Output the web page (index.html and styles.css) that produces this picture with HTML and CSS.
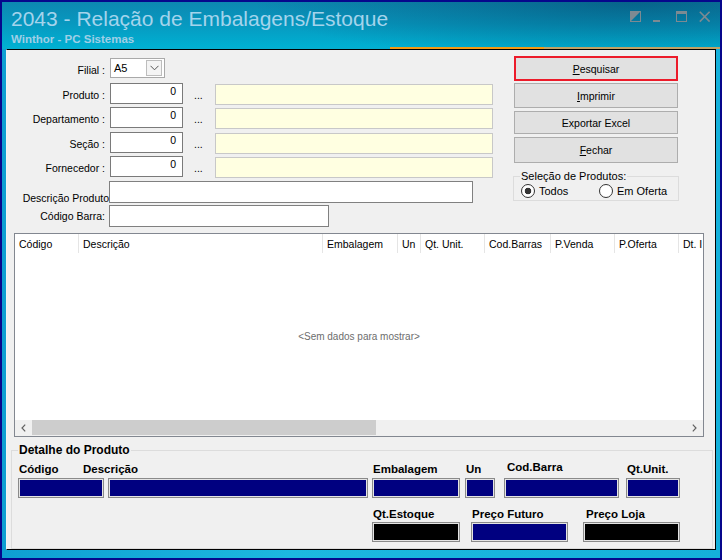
FILE: index.html
```html
<!DOCTYPE html>
<html lang="pt-BR">
<head>
    <meta charset="UTF-8">
    <title>2043 - Relação de Embalagens/Estoque</title>
    <link rel="stylesheet" href="styles.css">
</head>
<body>
<div class="window">
    <header class="titlebar">
        <div class="caption">
            <div class="title">2043 - Relação de Embalagens/Estoque</div>
            <div class="subtitle">Winthor - PC Sistemas</div>
        </div>
        <div class="controls">
            <svg width="12" height="12" viewBox="0 0 12 12"><rect x="0.5" y="0.5" width="10" height="10" fill="none" stroke="#7d8a92"/><polygon points="0,0 11,0 0,11" fill="#7d8a92"/></svg>
            <svg width="12" height="12" viewBox="0 0 12 12"><rect x="0" y="9" width="7" height="2" fill="#7d8a92"/></svg>
            <svg width="12" height="12" viewBox="0 0 12 12"><rect x="0.5" y="0.5" width="10" height="10" fill="none" stroke="#7d8a92"/><rect x="0" y="0" width="11" height="3" fill="#7d8a92"/></svg>
            <svg width="12" height="12" viewBox="0 0 12 12"><path d="M0.8 0.8 L10.6 10.6 M10.6 0.8 L0.8 10.6" stroke="#7d8a92" stroke-width="1.6" fill="none"/></svg>
        </div>
    </header>
    <div class="accent"></div>

    <main class="panel">
        <div class="top">
            <div class="form">
                <div class="row">
                    <label class="lbl">Filial :</label>
                    <div class="combo">
                        <span class="combo-val">A5</span>
                        <span class="combo-btn"><svg width="9" height="6" viewBox="0 0 9 6"><path d="M0.5 0.8 L4.5 4.8 L8.5 0.8" stroke="#555" fill="none"/></svg></span>
                    </div>
                </div>
                <div class="row">
                    <label class="lbl">Produto :</label>
                    <div class="num">0</div>
                    <span class="dots">...</span>
                    <div class="desc"></div>
                </div>
                <div class="row">
                    <label class="lbl">Departamento :</label>
                    <div class="num">0</div>
                    <span class="dots">...</span>
                    <div class="desc"></div>
                </div>
                <div class="row">
                    <label class="lbl">Seção :</label>
                    <div class="num">0</div>
                    <span class="dots">...</span>
                    <div class="desc"></div>
                </div>
                <div class="row">
                    <label class="lbl">Fornecedor :</label>
                    <div class="num">0</div>
                    <span class="dots">...</span>
                    <div class="desc"></div>
                </div>
                <div class="row">
                    <label class="lbl lbl-wide">Descrição Produto</label>
                    <div class="text text-long"></div>
                </div>
                <div class="row">
                    <label class="lbl lbl-mid">Código Barra:</label>
                    <div class="text text-short"></div>
                </div>
            </div>

            <div class="actions">
                <button class="btn btn-focus"><u>P</u>esquisar</button>
                <button class="btn btn-print"><u>I</u>mprimir</button>
                <button class="btn btn-export">Exportar Excel</button>
                <button class="btn btn-close"><u>F</u>echar</button>
                <fieldset class="choice">
                    <legend>Seleção de Produtos:</legend>
                    <span class="radio radio-on radio-first">Todos</span>
                    <span class="radio">Em Oferta</span>
                </fieldset>
            </div>
        </div>

        <div class="grid">
            <div class="grid-head">
                <div class="col c1">Código</div>
                <div class="col c2">Descrição</div>
                <div class="col c3">Embalagem</div>
                <div class="col c4">Un</div>
                <div class="col c5">Qt. Unit.</div>
                <div class="col c6">Cod.Barras</div>
                <div class="col c7">P.Venda</div>
                <div class="col c8">P.Oferta</div>
                <div class="col c9">Dt. I</div>
            </div>
            <div class="grid-body">&lt;Sem dados para mostrar&gt;</div>
            <div class="hscroll">
                <span class="arrow"><svg width="5" height="8" viewBox="0 0 5 8"><path d="M4.2 0.6 L1 4 L4.2 7.4" stroke="#606060" stroke-width="1.2" fill="none"/></svg></span>
                <span class="thumb"></span>
                <span class="track"></span>
                <span class="arrow"><svg width="5" height="8" viewBox="0 0 5 8"><path d="M0.8 0.6 L4 4 L0.8 7.4" stroke="#606060" stroke-width="1.2" fill="none"/></svg></span>
            </div>
        </div>

        <fieldset class="detail">
            <legend>Detalhe do Produto</legend>
            <div class="dlabels first-labels">
                <span class="dl w-codigo">Código</span>
                <span class="dl w-descricao">Descrição</span>
                <span class="dl w-embalagem">Embalagem</span>
                <span class="dl w-un">Un</span>
                <span class="dl w-codbarra">Cod.Barra</span>
                <span class="dl">Qt.Unit.</span>
            </div>
            <div class="dboxes">
                <span class="box b-codigo"></span>
                <span class="box b-descricao"></span>
                <span class="box b-embalagem"></span>
                <span class="box b-un"></span>
                <span class="box b-codbarra"></span>
                <span class="box b-qtunit"></span>
            </div>
            <div class="dlabels second-labels">
                <span class="dl w-estoque">Qt.Estoque</span>
                <span class="dl w-futuro">Preço Futuro</span>
                <span class="dl">Preço Loja</span>
            </div>
            <div class="dboxes second-boxes">
                <span class="box box-black b-estoque"></span>
                <span class="box b-futuro"></span>
                <span class="box box-black b-loja"></span>
            </div>
        </fieldset>
    </main>
</div>
</body>
</html>
```

FILE: styles.css
```css
*{
    margin:0;
    padding:0;
    box-sizing:border-box;
}

body {
    font-family:"Liberation Sans", Arial, sans-serif;
    font-size:10.5px;
    color:#000;
    background:#fff;
}

/* janela */
.window {
    width:722px;
    height:560px;
    border:2px solid #06078c;
    background:linear-gradient(to right, #0e9fd2, #1cb8e0 40%, #14b0da);
    padding:0 4px 8px;
    display:flex;
    flex-direction:column;
}
.titlebar {
    margin:0 -4px;
    height:45px;
    display:flex;
    justify-content:space-between;
    background:
        radial-gradient(ellipse 380px 60px at 88% 0%, rgba(0,55,90,0.45), rgba(0,55,90,0) 100%),
        linear-gradient(180deg, #0d88b1 0%, #0799c0 50%, #00b0d2 100%);
}
.caption {
    padding:5px 0 0 9px;
}
.title {
    font-size:21px;
    line-height:24px;
    color:#a4d4ec;
}
.subtitle {
    margin-top:2px;
    font-size:11.5px;
    line-height:13px;
    font-weight:bold;
    color:#9fcfe6;
}
.controls {
    display:flex;
    gap:11px;
    padding:9px 9px 0 0;
}
.accent {
    margin:0 -4px;
    height:2px;
    background:linear-gradient(to right, #05aed0 0, #05aed0 388px, #f29a16 388px, #f29a16 542px, #c0a266 542px);
}

/* painel */
.panel {
    flex:1;
    display:flex;
    flex-direction:column;
    background:#f0f0f0;
    border-top:1px solid #000;
    border-right:1px solid #000;
    border-bottom:1px solid #000;
    border-left:1px solid #f4f4f4;
}
.top {
    height:183px;
    display:flex;
}
.form {
    width:507px;
    padding-top:8px;
}
.row {
    height:24.5px;
    display:flex;
    align-items:flex-start;
}
.lbl {
    width:98px;
    margin-right:5px;
    text-align:right;
    line-height:20px;
    padding-top:2px;
    white-space:nowrap;
}
.lbl-wide {
    width:102px;
    margin-right:0;
    padding-top:11px;
    line-height:13px;
}
.lbl-mid {
    margin-right:4px;
    padding-top:1px;
}
.combo {
    width:55px;
    height:20px;
    background:#fff;
    border:1px solid #a9a9a9;
    display:flex;
    justify-content:space-between;
    align-items:center;
    padding:0 2px 0 3px;
}
.combo-val {
    font-size:11px;
    line-height:14px;
}
.combo-btn {
    width:16px;
    height:16px;
    border:1px solid #bdbdbd;
    background:#f4f4f4;
    display:flex;
    align-items:center;
    justify-content:center;
}
.num {
    width:73px;
    height:21px;
    background:#fff;
    border:1px solid #7a7a7a;
    text-align:right;
    padding:1px 6px 0 0;
    line-height:13px;
}
.dots {
    width:32px;
    padding:5px 0 0 11px;
    line-height:14px;
}
.desc {
    width:278px;
    height:21px;
    margin-top:1px;
    background:#ffffe1;
    border:1px solid #c8c8c8;
}
.text {
    height:22px;
    background:#fff;
    border:1px solid #808080;
}
.text-long {
    width:364px;
}
.text-short {
    width:220px;
}

/* botões */
.actions {
    width:164px;
    padding-top:6px;
    display:flex;
    flex-direction:column;
}
.btn {
    font:inherit;
    height:25px;
    background:#e1e1e1;
    border:1px solid #adadad;
    color:#000;
}
.btn-focus {
    border:2px solid #ec1b2a;
}
.btn-print {
    margin-top:2px;
}
.btn-export {
    margin-top:3px;
    height:23px;
}
.btn-close {
    margin-top:3px;
    height:26px;
}
.choice {
    width:166px;
    margin:7px 0 0 -1px;
    padding:1px 0 2px 7px;
    border:1px solid #dcdcdc;
    display:flex;
    min-width:0;
}
.choice legend {
    font-size:11px;
    line-height:13px;
    padding:0 1px;
    margin-left:-1px;
}
.radio {
    display:flex;
    align-items:center;
    font-size:11px;
    line-height:13px;
}
.radio::before {
    content:"";
    width:12px;
    height:12px;
    margin-right:4px;
    border:1px solid #333;
    border-radius:50%;
    background:#fff;
}
.radio-on::before {
    background:radial-gradient(circle, #333 0, #333 3px, #fff 3.6px);
}
.radio-first {
    width:78px;
}

/* grade */
.grid {
    width:690px;
    height:204px;
    margin-left:7px;
    border:1px solid #828790;
    background:#fff;
    display:flex;
    flex-direction:column;
}
.grid-head {
    height:19px;
    display:flex;
    overflow:hidden;
}
.col {
    flex:none;
    padding:2px 0 0 4px;
    line-height:17px;
    border-right:1px solid #e5e5e5;
    white-space:nowrap;
    overflow:hidden;
}
.c1 { width:64px; }
.c2 { width:244px; }
.c3 { width:75px; }
.c4 { width:23px; }
.c5 { width:64px; }
.c6 { width:66px; }
.c7 { width:64px; }
.c8 { width:64px; }
.c9 { flex:1; border-right:0; }
.grid-body {
    flex:1;
    display:flex;
    align-items:center;
    justify-content:center;
    font-size:10px;
    color:#6d6d6d;
}
.hscroll {
    height:16px;
    display:flex;
    background:#f0f0f0;
}
.arrow {
    width:17px;
    display:flex;
    align-items:center;
    justify-content:center;
}
.thumb {
    width:344px;
    height:15px;
    background:#cdcdcd;
}
.track {
    flex:1;
}

/* detalhe */
.detail {
    flex:1;
    min-width:0;
    margin:6px 2px 0 4px;
    padding:0 0 0 6px;
    border:1px solid #dcdcdc;
}
.detail legend {
    font-size:12px;
    line-height:14px;
    font-weight:bold;
    padding:0 1px;
}
.dlabels {
    display:flex;
    font-size:11.5px;
    line-height:14px;
    font-weight:bold;
}
.first-labels {
    margin-top:5px;
    padding-left:1px;
}
.second-labels {
    margin-top:9px;
    padding-left:355px;
}
.dl {
    white-space:nowrap;
}
.w-codigo { width:64px; }
.w-descricao { width:290px; }
.w-embalagem { width:93px; }
.w-un { width:41px; }
.w-codbarra { width:120px; margin-top:-2px; }
.w-estoque { width:99px; }
.w-futuro { width:114px; }
.dboxes {
    display:flex;
    margin-top:2px;
}
.second-boxes {
    margin-top:1px;
    padding-left:354px;
}
.box {
    height:20px;
    background:#000080;
    border:1px solid #8a8a8a;
    box-shadow:inset 0 0 0 1px #e4e4e4;
}
.box-black {
    background:#000;
}
.b-codigo { width:86px; }
.b-descricao { width:260px; margin-left:4px; }
.b-embalagem { width:88px; margin-left:4px; }
.b-un { width:30px; margin-left:5px; }
.b-codbarra { width:115px; margin-left:9px; }
.b-qtunit { width:54px; margin-left:7px; }
.b-estoque { width:88px; }
.b-futuro { width:97px; margin-left:11px; }
.b-loja { width:97px; margin-left:15px; }
```
